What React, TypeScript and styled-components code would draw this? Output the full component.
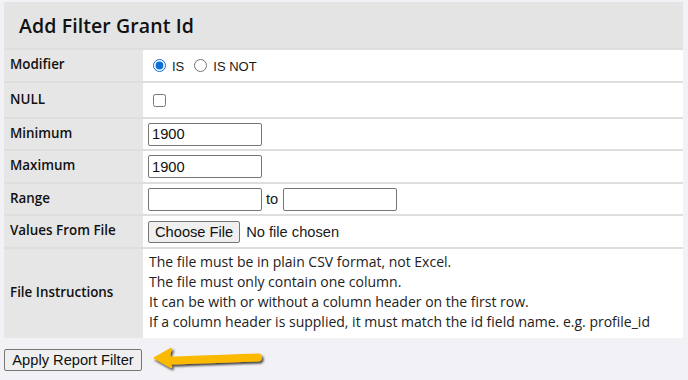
import React from "react";
import styled, { createGlobalStyle } from "styled-components";

const GlobalStyle = createGlobalStyle`
  html, body {
    margin: 0;
    padding: 0;
    background: #f1f1f6;
  }
  body {
    font-family: "Open Sans", "DejaVu Sans", sans-serif;
    color: #111;
  }
`;

type RowProps = { $h: number };

const rows = [
  "The file must be in plain CSV format, not Excel.",
  "The file must only contain one column.",
  "It can be with or without a column header on the first row.",
  "If a column header is supplied, it must match the id field name. e.g. profile_id",
];

const App = () => {
  return (
    <>
      <GlobalStyle />
      <Page>
        <Panel>
          <Title>Add Filter Grant Id</Title>
          <Row $h={33}>
            <Label>Modifier</Label>
            <Value>
              <Radio type="radio" name="mod" defaultChecked />
              <Small>IS</Small>
              <Radio type="radio" name="mod" />
              <Small>IS NOT</Small>
            </Value>
          </Row>
          <Row $h={36}>
            <Label>NULL</Label>
            <Value>
              <Check type="checkbox" />
            </Value>
          </Row>
          <Row $h={32}>
            <Label>Minimum</Label>
            <Value>
              <TextBox defaultValue="1900" />
            </Value>
          </Row>
          <Row $h={33}>
            <Label>Maximum</Label>
            <Value>
              <TextBox defaultValue="1900" />
            </Value>
          </Row>
          <Row $h={32}>
            <Label>Range</Label>
            <Value>
              <TextBox />
              <Plain>to</Plain>
              <TextBox />
            </Value>
          </Row>
          <Row $h={33}>
            <Label>Values From File</Label>
            <Value>
              <FileButton type="button">Choose File</FileButton>
              <Plain>No file chosen</Plain>
            </Value>
          </Row>
          <Row $h={91}>
            <Label>File Instructions</Label>
            <Instructions>
              {rows.map((r) => (
                <div key={r}>{r}</div>
              ))}
            </Instructions>
          </Row>
        </Panel>
        <Footer>
          <ApplyButton type="button">Apply Report Filter</ApplyButton>
          <Arrow width="118" height="30" viewBox="0 0 118 30">
            <defs>
              <filter id="sh" x="-10%" y="-30%" width="130%" height="180%">
                <feDropShadow dx="1.5" dy="2" stdDeviation="1" floodColor="#1a1a1a" floodOpacity="0.85" />
              </filter>
            </defs>
            <g filter="url(#sh)">
              <path
                d="M16 15.5 C 45 15, 80 13, 106 12.5"
                stroke="#fbb900"
                strokeWidth="8"
                strokeLinecap="round"
                fill="none"
              />
              <path
                d="M3 13 L19 4 Q16 10 18 14 Q17 18 19 22 Z"
                fill="#fbb900"
                stroke="#fbb900"
                strokeWidth="2.5"
                strokeLinejoin="round"
              />
            </g>
          </Arrow>
        </Footer>
      </Page>
    </>
  );
};

const Page = styled.div`
  padding: 2px 5px 0 4px;
`;

const Panel = styled.div`
  background: #fff;
  width: 679px;
`;

const Title = styled.h2`
  margin: 0;
  height: 46px;
  box-sizing: border-box;
  padding: 10px 15px 0;
  background: #e4e4e4;
  font-size: 19.5px;
  font-weight: 600;
  color: #111;
  letter-spacing: 0.1px;
`;

const Row = styled.div<RowProps>`
  display: grid;
  grid-template-columns: 139px 1fr;
  height: ${(p) => p.$h}px;
  border-top: 2px solid #dedede;
  box-sizing: border-box;
`;

const Label = styled.div`
  background: #e6e6e6;
  display: flex;
  align-items: center;
  padding: 0 0 3px 6px;
  font-size: 13.4px;
  font-weight: 600;
  color: #111;
`;

const Value = styled.div`
  display: flex;
  align-items: center;
  gap: 4px;
  padding-left: 5px;
  font-family: "Liberation Sans", Arial, sans-serif;
  font-size: 14.67px;
`;

const Plain = styled.span`
  color: #1a1a1a;
  margin-right: 1px;
`;

const Small = styled.span`
  color: #1a1a1a;
  font-size: 13px;
  margin: 2px 1px 0 0;
`;

const Radio = styled.input`
  width: 13px;
  height: 13px;
  margin: 0 2px 0 5px;
  accent-color: #0b6fd8;
`;

const Check = styled.input`
  width: 13px;
  height: 13px;
  margin: 0 0 0 5px;
`;

const TextBox = styled.input`
  width: 114px;
  height: 23px;
  box-sizing: border-box;
  border: 1px solid #767676;
  border-radius: 2px;
  padding: 1px 3px;
  font-family: "Liberation Sans", Arial, sans-serif;
  font-size: 14.67px;
  color: #111;
  background: #fff;
`;

const FileButton = styled.button`
  height: 22px;
  box-sizing: border-box;
  padding: 0 6px;
  border: 1px solid #767676;
  border-radius: 2px;
  background: #efefef;
  font-family: "Liberation Sans", Arial, sans-serif;
  font-size: 14.67px;
  color: #111;
  margin-right: 2px;
`;

const Instructions = styled.div`
  display: flex;
  flex-direction: column;
  justify-content: center;
  padding: 0 0 4px 6px;
  font-size: 14px;
  line-height: 20px;
  color: #222;
`;

const Footer = styled.div`
  display: flex;
  align-items: flex-start;
  gap: 10px;
  margin-top: 11px;
`;

const ApplyButton = styled.button`
  width: 138px;
  height: 22px;
  box-sizing: border-box;
  padding: 0;
  border: 1px solid #767676;
  border-radius: 2px;
  background: #efefef;
  font-family: "Liberation Sans", Arial, sans-serif;
  font-size: 14.67px;
  color: #111;
`;

const Arrow = styled.svg`
  display: block;
  margin-top: -4px;
`;

export default App;
